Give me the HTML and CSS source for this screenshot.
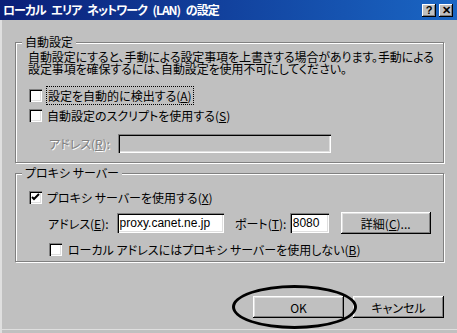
FILE: index.html
```html
<!DOCTYPE html>
<html lang="ja">

<head>
    <meta charset="UTF-8">
    <title>ローカル エリア ネットワーク (LAN) の設定</title>
    <link rel="stylesheet" href="styles.css">
</head>

<body>
    <div class="window">
        <div class="titlebar">
            <span class="title">ローカル エリア ネットワーク (LAN) の設定</span>
            <div class="title-buttons">
                <span class="tbtn">?</span>
                <span class="tbtn">&#x2715;</span>
            </div>
        </div>

        <div class="content">
            <div class="group group-auto">
                <span class="group-title">自動設定</span>
                <div class="note">
                    <div class="note-line">自動設定にすると、手動による設定事項を上書きする場合があります。手動による</div>
                    <div class="note-line">設定事項を確保するには、自動設定を使用不可にしてください。</div>
                </div>
                <div class="check-row check-first">
                    <span class="checkbox"></span>
                    <span class="focus">設定を自動的に検出する(<u>A</u>)</span>
                </div>
                <div class="check-row">
                    <span class="checkbox"></span>
                    <span>自動設定のスクリプトを使用する(<u>S</u>)</span>
                </div>
                <div class="field-row field-disabled">
                    <span class="field-label">アドレス(<u>R</u>):</span>
                    <span class="input input-off"></span>
                </div>
            </div>

            <div class="group group-proxy">
                <span class="group-title">プロキシ サーバー</span>
                <div class="check-row">
                    <span class="checkbox checked">
                        <svg width="9" height="9" viewBox="0 0 9 9"><path d="M1 4 L3 6 L8 1" fill="none" stroke="#000" stroke-width="2"/></svg>
                    </span>
                    <span>プロキシ サーバーを使用する(<u>X</u>)</span>
                </div>
                <div class="field-row proxy-row">
                    <span class="field-label">アドレス(<u>E</u>):</span>
                    <span class="input input-addr">proxy.canet.ne.jp</span>
                    <span class="field-label port-label">ポート(<u>T</u>):</span>
                    <span class="input input-port">8080</span>
                    <button class="btn btn-detail">詳細(<u>C</u>)...</button>
                </div>
                <div class="check-row check-local">
                    <span class="checkbox"></span>
                    <span>ローカル アドレスにはプロキシ サーバーを使用しない(<u>B</u>)</span>
                </div>
            </div>

            <div class="actions">
                <div class="ok-wrap">
                    <button class="btn">OK</button>
                    <span class="ring"></span>
                </div>
                <button class="btn">キャンセル</button>
            </div>
        </div>
    </div>
</body>

</html>
```

FILE: styles.css
```css
body {
    margin: 0;
    background: #c0c0c0;
    font-family: "Noto Sans CJK JP", "Noto Sans", sans-serif;
    font-size: 12px;
    font-feature-settings: "palt";
    color: #000;
}

.window {
    width: 457px;
    height: 333px;
    box-sizing: border-box;
    background: #c0c0c0;
    box-shadow: inset 2px 0 #dfdfdf, inset 0 -3px #c0c0c0, inset 0 -4px #dfdfdf;
    overflow: hidden;
}

.titlebar {
    height: 20px;
    display: flex;
    align-items: center;
    justify-content: space-between;
    background: linear-gradient(to right, #0a1e78, #1a66c4);
    padding: 0 4px 0 3px;
}

.title {
    color: white;
    font-size: 12px;
    font-weight: bold;
    letter-spacing: -1px;
    word-spacing: 4px;
    line-height: 20px;
    white-space: nowrap;
}

.title-buttons {
    display: flex;
    gap: 3px;
}

.tbtn {
    width: 14px;
    height: 13px;
    background: #c0c0c0;
    box-shadow: inset -1px -1px #000, inset 1px 1px #fff, inset -2px -2px #808080;
    font-family: "Liberation Sans", sans-serif;
    font-weight: bold;
    font-size: 11px;
    line-height: 13px;
    text-align: center;
}

.content {
    padding: 22px 13px 0 15px;
}

.group {
    position: relative;
    box-sizing: border-box;
    width: 429px;
    border: 1px solid #808080;
    box-shadow: inset 1px 1px #fff, 1px 1px #fff;
    padding: 0 12px;
}

.group-auto {
    height: 121px;
    padding-top: 8px;
}

.group-proxy {
    height: 89px;
    margin-top: 10px;
    padding-top: 13px;
}

.group-title {
    position: absolute;
    top: -8px;
    left: 6px;
    padding: 0 3px;
    background: #c0c0c0;
    line-height: 14px;
}

.note-line {
    height: 12px;
    line-height: 12px;
    white-space: nowrap;
    letter-spacing: -0.1px;
}

.check-row {
    display: flex;
    align-items: center;
    height: 20px;
    gap: 5px;
    white-space: nowrap;
}

.check-first {
    margin-top: 10px;
}

.checkbox {
    width: 13px;
    height: 13px;
    box-sizing: border-box;
    margin-left: 1px;
    background: #fff;
    box-shadow: inset 1px 1px #808080, inset 2px 2px #000, inset -1px -1px #fff, inset -2px -2px #dfdfdf;
    display: flex;
    align-items: center;
    justify-content: center;
}

.focus {
    outline: 1px dotted #000;
    padding: 0 1px;
}

.field-row {
    display: flex;
    align-items: center;
    white-space: nowrap;
}

.field-disabled {
    margin-top: 9px;
    padding-left: 21px;
}

.field-disabled .field-label {
    color: #808080;
    text-shadow: 1px 1px #fff;
    width: 69px;
}

.input {
    box-sizing: border-box;
    height: 20px;
    background: #fff;
    box-shadow: inset 1px 1px #808080, inset 2px 2px #000, inset -1px -1px #fff, inset -2px -2px #dfdfdf;
    font-family: "Liberation Sans", sans-serif;
    font-size: 12px;
    line-height: 20px;
    padding-left: 3px;
}

.input-off {
    width: 213px;
    height: 19px;
    background: #c0c0c0;
}

.proxy-row {
    margin-top: 5px;
    height: 22px;
    padding-left: 20px;
}

.proxy-row .field-label {
    width: 69px;
}

.input-addr {
    width: 108px;
}

.port-label {
    margin-left: 11px;
}

.proxy-row .port-label {
    width: 55px;
}

.input-port {
    width: 39px;
}

.btn {
    height: 22px;
    width: 91px;
    padding: 0;
    border: none;
    background: #c0c0c0;
    box-shadow: inset -1px -1px #000, inset 1px 1px #fff, inset -2px -2px #808080, inset 2px 2px #dfdfdf;
    font-family: "Noto Sans CJK JP", sans-serif;
    font-feature-settings: "palt";
    font-size: 12px;
    color: #000;
}

.btn-detail {
    margin-left: 12px;
}

.check-local {
    margin-top: 5px;
    padding-left: 20px;
    gap: 6px;
}

.actions {
    display: flex;
    justify-content: flex-end;
    gap: 9px;
    margin-top: 34px;
}

.ok-wrap {
    position: relative;
}

.ok-wrap .btn {
    display: block;
}

.ring {
    position: absolute;
    left: -21px;
    top: -11px;
    width: 119px;
    height: 38px;
    border: 3px solid #000;
    border-radius: 50%;
    pointer-events: none;
}
```
